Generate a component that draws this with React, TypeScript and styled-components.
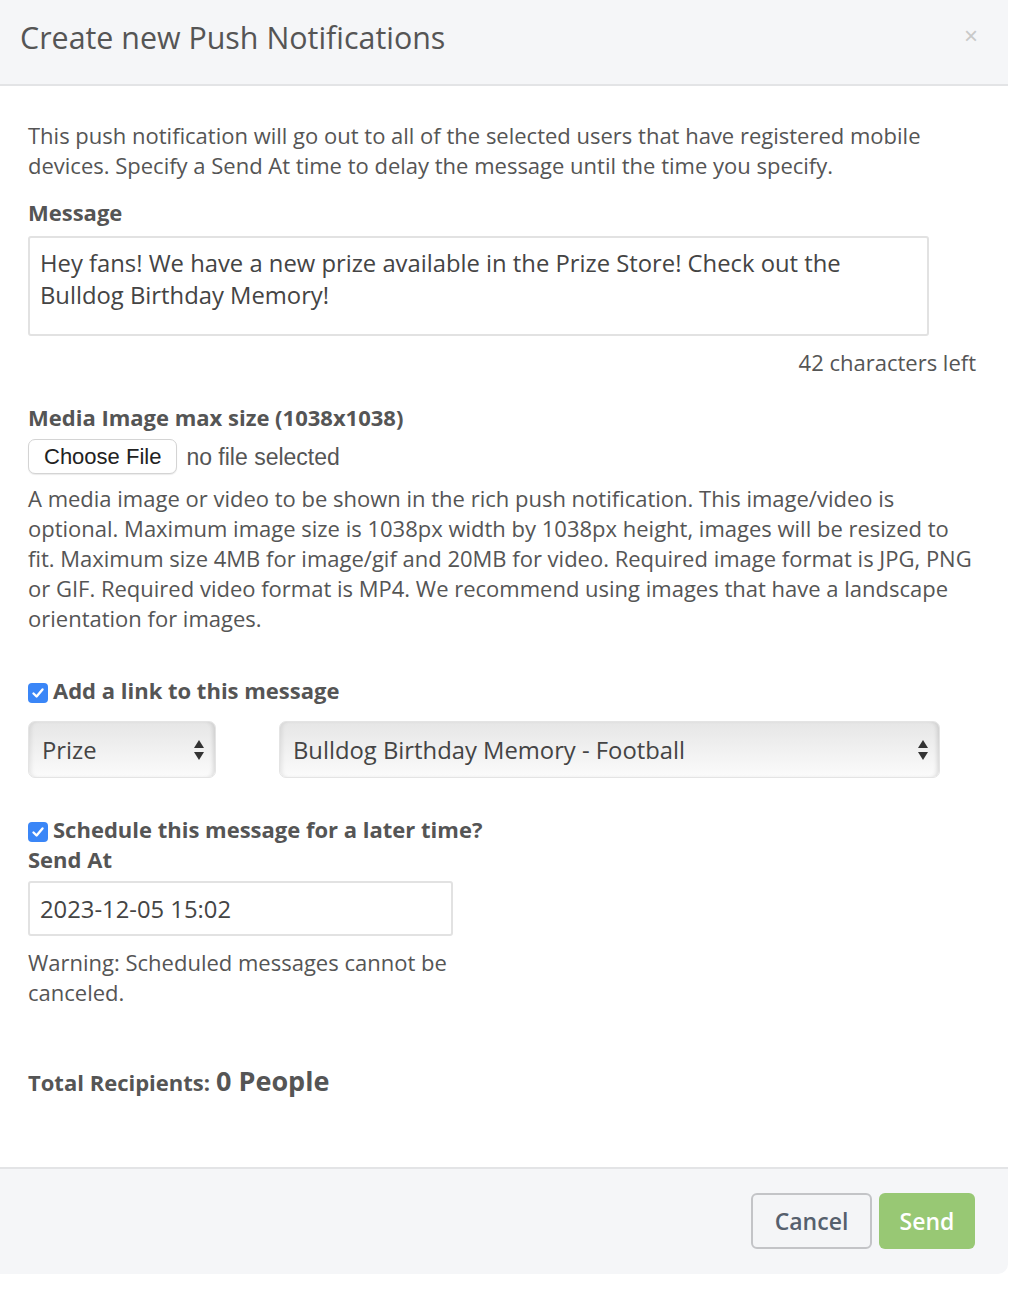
import styled, { createGlobalStyle } from "styled-components";

const COLORS = {
  text: "#555555",
  headerBg: "#f5f6f8",
  border: "#e3e4e6",
  blue: "#3a86f7",
  green: "#98c874",
  slate: "#56606d",
};

const GlobalStyle = createGlobalStyle`
  html, body {
    margin: 0;
    padding: 0;
    background: #ffffff;
  }
  body {
    font-family: "Open Sans", "Noto Sans", sans-serif;
    color: ${COLORS.text};
  }
`;

const Modal = styled.div`
  width: 1008px;
  background: #ffffff;
  border-radius: 0 0 10px 0;
  overflow: hidden;
`;

const Header = styled.header`
  height: 84px;
  background: ${COLORS.headerBg};
  border-bottom: 2px solid ${COLORS.border};
  display: flex;
  align-items: center;
  justify-content: space-between;
  padding: 0 30px 0 20px;
`;

const Title = styled.h2`
  margin: 0 0 10px 0;
  font-size: 30.4px;
  font-weight: 400;
  color: ${COLORS.text};
`;

const Close = styled.span`
  font-size: 24px;
  color: #c9c9c9;
  margin-bottom: 12px;
  font-family: "Liberation Sans", sans-serif;
`;

const Body = styled.div`
  padding: 34px 32px 70px 28px;
  display: flex;
  flex-direction: column;
  font-size: 22px;
  line-height: 30px;
`;

const Paragraph = styled.p<{ $mt?: number }>`
  margin: ${({ $mt }) => $mt ?? 0}px 0 0 0;
`;

const Label = styled.label<{ $mt: number }>`
  display: block;
  margin-top: ${({ $mt }) => $mt}px;
  font-weight: 700;
  color: ${COLORS.text};
`;

const TextArea = styled.div`
  margin-top: 9px;
  width: 901px;
  height: 100px;
  box-sizing: border-box;
  border: 2px solid #e2e2e2;
  border-radius: 3px;
  padding: 9px 10px;
  font-size: 23.8px;
  line-height: 32px;
  color: #444;
`;

const Counter = styled.div`
  margin-top: 11px;
  text-align: right;
`;

const FileRow = styled.div`
  margin-top: 7px;
  display: flex;
  align-items: center;
  gap: 9px;
`;

const FileButton = styled.button`
  height: 35px;
  padding: 0 15px;
  border: 1px solid #d4d4d4;
  border-radius: 7px;
  background: #ffffff;
  font-family: "Liberation Sans", Arial, sans-serif;
  font-size: 22px;
  color: #222;
  box-shadow: 0 1px 1px rgba(0, 0, 0, 0.08);
`;

const FileStatus = styled.span`
  font-family: "Liberation Sans", Arial, sans-serif;
  font-size: 23px;
  color: #555;
`;

const CheckRow = styled.div<{ $mt: number }>`
  margin-top: ${({ $mt }) => $mt}px;
  display: flex;
  align-items: center;
  gap: 5px;
  font-weight: 700;
`;

const CheckBox = styled.span`
  width: 20px;
  height: 20px;
  border-radius: 4px;
  background: ${COLORS.blue};
  display: inline-flex;
  align-items: center;
  justify-content: center;
  margin-top: 5px;
`;

const SelectRow = styled.div`
  margin-top: 16px;
  display: flex;
  gap: 63px;
`;

const Select = styled.div<{ $width: number }>`
  width: ${({ $width }) => $width}px;
  height: 57px;
  box-sizing: border-box;
  border-radius: 7px;
  border: 1px solid #e4e4e4;
  background: linear-gradient(#e6e6e6, #fbfbfb);
  box-shadow: inset 4px 0 4px -2px rgba(0, 0, 0, 0.08),
    inset -4px 0 4px -2px rgba(0, 0, 0, 0.12);
  display: flex;
  align-items: center;
  justify-content: space-between;
  padding: 0 10px 0 13px;
  font-size: 23.8px;
  color: #444;
`;

const DateInput = styled.div`
  margin-top: 7px;
  width: 425px;
  height: 55px;
  box-sizing: border-box;
  border: 2px solid #e2e2e2;
  border-radius: 3px;
  display: flex;
  align-items: center;
  padding: 0 10px;
  font-size: 23.8px;
  color: #444;
`;

const Warning = styled.p`
  margin: 11px 0 0 0;
  width: 430px;
`;

const Total = styled.div`
  margin-top: 59px;
  font-weight: 700;
  display: flex;
  align-items: baseline;
  gap: 6px;
`;

const Big = styled.span`
  font-size: 27px;
`;

const Footer = styled.footer`
  box-sizing: border-box;
  background: ${COLORS.headerBg};
  border-top: 2px solid ${COLORS.border};
  height: 107px;
  display: flex;
  justify-content: flex-end;
  align-items: flex-start;
  padding: 24px 33px 0 0;
  gap: 7px;
`;

const Button = styled.button<{ $primary?: boolean }>`
  height: 56px;
  border-radius: 6px;
  font-family: "Open Sans", sans-serif;
  font-size: 23px;
  font-weight: 600;
  padding: 0 20px;
  border: ${({ $primary }) => ($primary ? "none" : "2px solid #c3c4c7")};
  background: ${({ $primary }) => ($primary ? COLORS.green : "#f4f5f7")};
  color: ${({ $primary }) => ($primary ? "#ffffff" : COLORS.slate)};
  min-width: ${({ $primary }) => ($primary ? 96 : 121)}px;
`;

const Check = () => (
  <CheckBox>
    <svg width="14" height="14" viewBox="0 0 14 14">
      <path d="M2.5 7.5 L5.6 10.5 L11.5 3.5" stroke="#fff" strokeWidth="2.4" fill="none" strokeLinecap="round" strokeLinejoin="round" />
    </svg>
  </CheckBox>
);

const Arrows = () => (
  <svg width="12" height="24" viewBox="0 0 12 24">
    <path d="M6 2 L11 10 L1 10 Z" fill="#333" />
    <path d="M6 22 L11 14 L1 14 Z" fill="#333" />
  </svg>
);

export default function App() {
  return (
    <>
      <GlobalStyle />
      <Modal>
        <Header>
          <Title>Create new Push Notifications</Title>
          <Close>×</Close>
        </Header>
        <Body>
          <Paragraph>
            This push notification will go out to all of the selected users that have registered mobile
            devices. Specify a Send At time to delay the message until the time you specify.
          </Paragraph>
          <Label $mt={17}>Message</Label>
          <TextArea>
            Hey fans! We have a new prize available in the Prize Store! Check out the Bulldog Birthday Memory!
          </TextArea>
          <Counter>42 characters left</Counter>
          <Label $mt={25}>Media Image max size (1038x1038)</Label>
          <FileRow>
            <FileButton type="button">Choose File</FileButton>
            <FileStatus>no file selected</FileStatus>
          </FileRow>
          <Paragraph $mt={9}>
            A media image or video to be shown in the rich push notification. This image/video is
            optional. Maximum image size is 1038px width by 1038px height, images will be resized to
            fit. Maximum size 4MB for image/gif and 20MB for video. Required image format is JPG, PNG
            or GIF. Required video format is MP4. We recommend using images that have a landscape
            orientation for images.
          </Paragraph>
          <CheckRow $mt={42}>
            <Check />
            Add a link to this message
          </CheckRow>
          <SelectRow>
            <Select $width={188}>
              Prize
              <Arrows />
            </Select>
            <Select $width={661}>
              Bulldog Birthday Memory - Football
              <Arrows />
            </Select>
          </SelectRow>
          <CheckRow $mt={36}>
            <Check />
            Schedule this message for a later time?
          </CheckRow>
          <Label $mt={0}>Send At</Label>
          <DateInput>2023-12-05 15:02</DateInput>
          <Warning>Warning: Scheduled messages cannot be canceled.</Warning>
          <Total>
            Total Recipients: <Big>0 People</Big>
          </Total>
        </Body>
        <Footer>
          <Button type="button">Cancel</Button>
          <Button type="button" $primary>
            Send
          </Button>
        </Footer>
      </Modal>
    </>
  );
}
